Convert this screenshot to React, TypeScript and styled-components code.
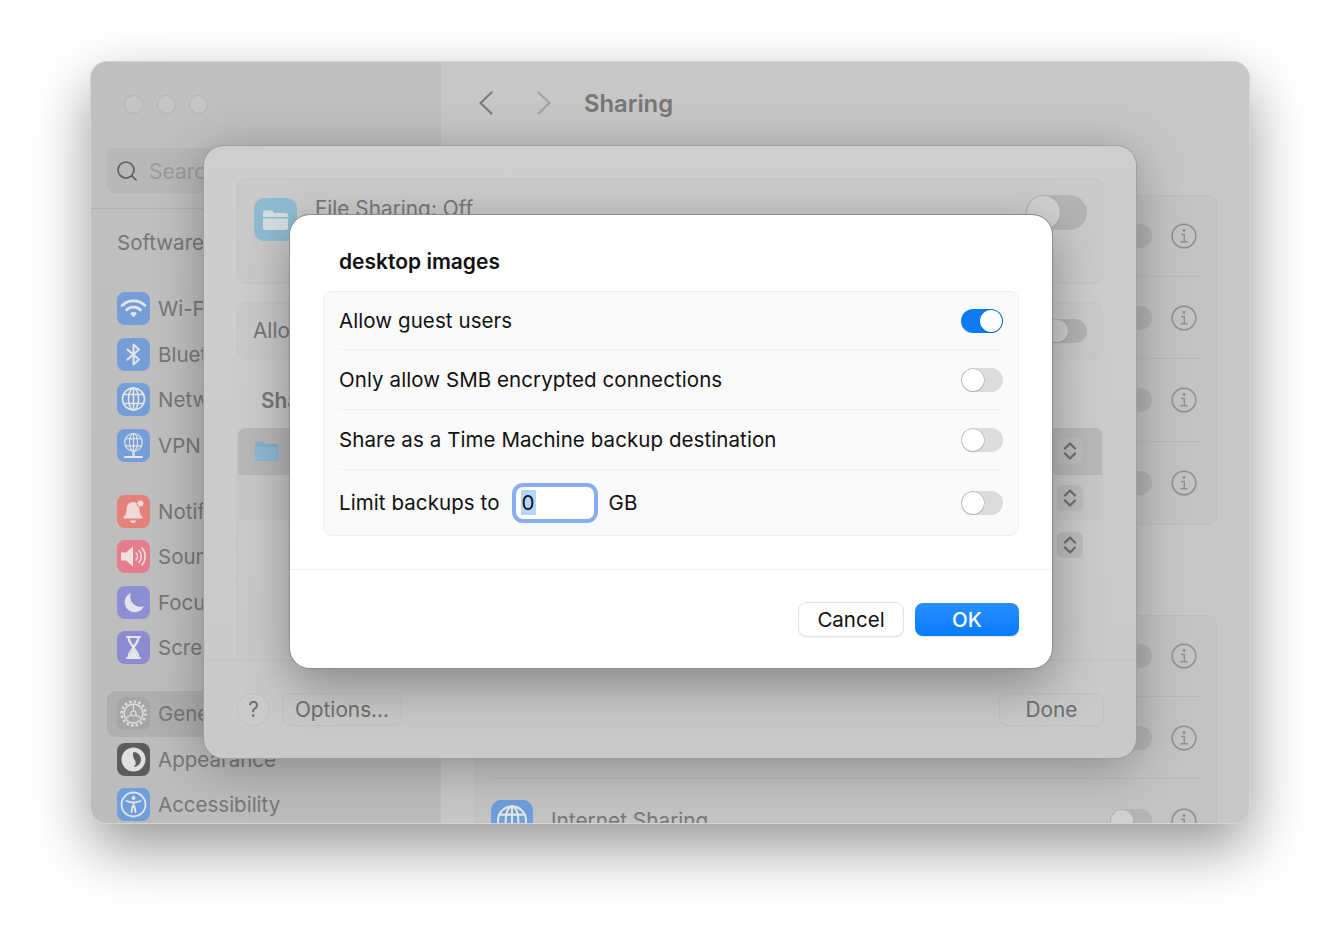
import React from "react";
import styled, { createGlobalStyle } from "styled-components";
import { Search } from "lucide-react";

const Global = createGlobalStyle`
  html, body { margin: 0; padding: 0; background: #fff; }
  body { font-family: Inter, "Noto Sans", "Liberation Sans", sans-serif; -webkit-font-smoothing: antialiased; }
`;

const Page = styled.div`
  width: 1340px;
  height: 943px;
  padding: 62px 91px 120px;
  box-sizing: border-box;
  overflow: hidden;
  background: #fff;
`;

const Win = styled.div`
  position: relative;
  width: 1158px;
  height: 761px;
  border-radius: 16px;
  display: flex;
  background: #c6c7c6;
  box-shadow: 0 0 0 1px #d4d4d4, 0 24px 60px rgba(0, 0, 0, 0.42);
`;

const WinClip = styled.div`
  flex: 1;
  display: flex;
  border-radius: 16px;
  overflow: hidden;
  position: relative;
`;

const Sidebar = styled.aside`
  width: 350px;
  flex: none;
  border-right: 1px solid #bbbcbb;
  box-sizing: border-box;
  background: linear-gradient(#bfc0bf, #bcbcbc);
  display: flex;
  flex-direction: column;
`;

const Lights = styled.div`
  display: flex;
  gap: 13.5px;
  padding: 33px 0 0 33px;
  height: 54px;
  box-sizing: border-box;
  flex: none;
`;

const Light = styled.span`
  width: 19px;
  height: 19px;
  border-radius: 50%;
  background: #c5c5c5;
  border: 1px solid #b3b3b3;
  box-sizing: border-box;
`;

const SearchBox = styled.div`
  margin: 32px 0 0 15px;
  width: 300px;
  height: 45px;
  border-radius: 9px;
  background: #b7b8b7;
  display: flex;
  align-items: center;
  gap: 10px;
  padding-left: 9px;
  box-sizing: border-box;
  color: #5f5f5f;
  font-size: 21px;
  flex: none;
  span { color: #9b9b9b; position: relative; top: 1px; }
`;

const SideRule = styled.div`
  margin-top: 15px;
  height: 1px;
  background: #b0b1b0;
  flex: none;
`;

const SoftwareLabel = styled.div`
  padding: 21px 0 0 26px;
  height: 77px;
  box-sizing: border-box;
  font-size: 20.5px;
  line-height: 26px;
  color: #777;
  flex: none;
`;

const SideGroup = styled.div<{ $top: number }>`
  display: flex;
  flex-direction: column;
  flex: none;
  margin-top: ${(p) => p.$top}px;
`;

const SideItem = styled.div<{ $active?: boolean }>`
  height: 45.5px;
  margin-left: 16px;
  margin-right: 10px;
  padding-left: 10px;
  display: flex;
  align-items: center;
  gap: 8px;
  border-radius: 9px;
  font-size: 20.5px;
  color: #777;
  background: ${(p) => (p.$active ? "#aeafae" : "transparent")};
`;

const AppIcon = styled.span<{ $bg: string; $size?: number; $radius?: number }>`
  width: ${(p) => p.$size ?? 33}px;
  height: ${(p) => p.$size ?? 33}px;
  flex: none;
  border-radius: ${(p) => p.$radius ?? 8}px;
  background: ${(p) => p.$bg};
  display: flex;
  align-items: center;
  justify-content: center;
  svg { display: block; }
`;

const Main = styled.main`
  flex: 1;
  min-width: 0;
  display: flex;
  flex-direction: column;
  background: #c6c7c6;
`;

const Header = styled.header`
  height: 82px;
  flex: none;
  display: flex;
  align-items: center;
  color: #777;
  padding: 0 0 0 30px;
  font-size: 23.8px;
  font-weight: 600;
`;

const NavBtn = styled.span<{ $off?: boolean }>`
  width: 30px;
  height: 36px;
  display: flex;
  align-items: center;
  justify-content: center;
  margin-right: 28px;
  color: ${(p) => (p.$off ? "#a3a4a3" : "#7c7c7c")};
`;

const Title = styled.h1`
  margin: 0 0 0 -3px;
  font: inherit;
`;

const Card = styled.section<{ $top: number }>`
  margin: ${(p) => p.$top}px 32px 0 34px;
  border: 1px solid #bdbebd;
  border-radius: 9px;
  background: #c2c3c2;
  padding: 0 16px 0 15px;
  flex: none;
`;

const ListRow = styled.div`
  height: 82px;
  box-sizing: border-box;
  display: flex;
  align-items: center;
  gap: 18px;
  border-bottom: 1px solid #b9bab9;
  font-size: 20.8px;
  color: #777;
  &:first-child { height: 81px; }
  &:nth-child(3) { height: 83px; }
  &:last-child { border-bottom: 0; }
`;

const RowLabel = styled.span`
  flex: 1;
`;

const Track = styled.span<{ $on?: boolean; $dim?: boolean; $big?: boolean }>`
  position: relative;
  flex: none;
  display: block;
  width: ${(p) => (p.$big ? 61 : 42)}px;
  height: ${(p) => (p.$big ? 35 : 24)}px;
  border-radius: 18px;
  background: ${(p) => (p.$on ? "#0f7bf2" : p.$dim ? "#b3b4b3" : "#dcdcdc")};
`;

const Knob = styled.span<{ $on?: boolean; $dim?: boolean; $big?: boolean }>`
  position: absolute;
  top: 1px;
  ${(p) => (p.$on ? "right: 1px;" : "left: 1px;")}
  width: ${(p) => (p.$big ? 33 : 22)}px;
  height: ${(p) => (p.$big ? 33 : 22)}px;
  border-radius: 50%;
  background: ${(p) => (p.$dim ? "#cfd0cf" : "#fff")};
  box-shadow: 0 0 0 0.5px ${(p) => (p.$dim ? "#aeaeae" : p.$on ? "#0f66d8" : "#aaa")}, 0 1px 1px rgba(0, 0, 0, 0.18);
`;

const BigToggleSlot = styled.div`
  padding-top: 16px;
  flex: none;
`;

const Sheet = styled.div`
  position: absolute;
  left: 113px;
  top: 84px;
  width: 932px;
  height: 612px;
  border-radius: 20px;
  background: linear-gradient(#cdcecd, #c8c9c8);
  box-shadow: 0 0 0 1px #9f9f9f, 0 8px 50px rgba(0, 0, 0, 0.3);
  padding: 32px 33px 0;
  box-sizing: border-box;
  display: flex;
  flex-direction: column;
`;

const SheetCard = styled.div<{ $h: number; $mt?: number }>`
  height: ${(p) => p.$h}px;
  margin-top: ${(p) => p.$mt ?? 0}px;
  flex: none;
  border: 1px solid #c3c4c3;
  border-radius: 9px;
  background: #c9cac9;
  box-sizing: border-box;
  display: flex;
  padding: 0 15px;
  font-size: 20.8px;
  color: #777;
`;

const FileTop = styled.div`
  flex: 1;
  display: flex;
  align-items: flex-start;
  gap: 18px;
  padding: 19px 0 0 1px;
  line-height: 22px;
`;

const AllowRow = styled.div`
  flex: 1;
  display: flex;
  justify-content: space-between;
  align-items: center;
`;

const SharedHead = styled.div`
  height: 69px;
  flex: none;
  box-sizing: border-box;
  padding: 29px 0 0 24px;
  font-size: 20.8px;
  font-weight: 600;
  line-height: 26px;
  color: #777;
`;

const Table = styled.div`
  height: 232px;
  flex: none;
  border-left: 1px solid #c3c4c3;
  border-right: 1px solid #c3c4c3;
  border-top-left-radius: 8px;
  border-top-right-radius: 8px;
  overflow: hidden;
`;

const TRow = styled.div<{ $sel?: boolean; $alt?: boolean }>`
  height: 46.7px;
  box-sizing: border-box;
  display: flex;
  align-items: center;
  padding: 0 19px 0 16px;
  background: ${(p) => (p.$sel ? "#b7b8b7" : p.$alt ? "#c6c7c6" : "transparent")};
`;

const Stepper = styled.span`
  width: 26px;
  height: 26px;
  border-radius: 6px;
  background: #bcbdbc;
  display: flex;
  margin-left: auto;
`;

const SheetFooter = styled.div`
  margin: 0 -33px;
  padding: 32px 32px 0 33px;
  border-top: 1px solid #c2c3c2;
  display: flex;
  align-items: center;
  gap: 12px;
  flex: none;
`;

const HelpBtn = styled.span`
  width: 33px;
  height: 33px;
  border-radius: 50%;
  border: 1px solid #c0c1c0;
  background: #cacbca;
  box-sizing: border-box;
  display: flex;
  align-items: center;
  justify-content: center;
  font-size: 21px;
  color: #6f6f6f;
`;

const GhostBtn = styled.span<{ $w: number; $push?: boolean }>`
  width: ${(p) => p.$w}px;
  height: 33px;
  border-radius: 8px;
  border: 1px solid #bfc0bf;
  background: #c8c9c8;
  box-sizing: border-box;
  display: flex;
  align-items: center;
  justify-content: center;
  font-size: 20.8px;
  color: #6f6f6f;
  margin-left: ${(p) => (p.$push ? "auto" : "0")};
`;

const Dialog = styled.div`
  position: absolute;
  left: 86px;
  top: 69px;
  width: 762px;
  height: 453px;
  border-radius: 20px;
  background: #fff;
  box-shadow: 0 0 0 1px #8e8e8e, 0 16px 50px rgba(0, 0, 0, 0.34);
  display: flex;
  flex-direction: column;
  color: #111;
`;

const DialogTitle = styled.h2`
  margin: 33px 0 0;
  padding-left: 49px;
  font-size: 21px;
  line-height: 28px;
  font-weight: 600;
  color: #111;
`;

const Group = styled.div`
  margin: 15px 33px 0;
  height: 245px;
  flex: none;
  box-sizing: border-box;
  background: #fafafa;
  border: 1px solid #efefef;
  border-radius: 9px;
  padding: 0 15px;
  display: flex;
  flex-direction: column;
  letter-spacing: 0.08px;
`;

const GRow = styled.div<{ $last?: boolean }>`
  flex: ${(p) => (p.$last ? "1" : "none")};
  height: ${(p) => (p.$last ? "auto" : "60px")};
  box-sizing: border-box;
  display: flex;
  align-items: center;
  border-bottom: ${(p) => (p.$last ? "0" : "1px solid #efefef")};
  font-size: 20.5px;
  color: #111;
  &:first-child { height: 58px; }
`;

const GLabel = styled.span`
  flex: 1;
  display: flex;
  align-items: center;
`;

const NumberField = styled.span`
  width: 86px;
  height: 40px;
  margin: 0 11px 0 12px;
  box-sizing: border-box;
  border: 4px solid #86aef0;
  border-radius: 11px;
  background: #fff;
  display: flex;
  align-items: center;
  padding-left: 5px;
`;

const Selected = styled.span`
  background: #b4d5fe;
  padding: 0 1px;
  line-height: 25px;
`;

const DialogFooter = styled.div`
  margin-top: 33px;
  border-top: 1px solid #efefef;
  padding: 32.5px 33px 0;
  display: flex;
  justify-content: flex-end;
  gap: 12px;
`;

const Btn = styled.span<{ $primary?: boolean }>`
  width: 104px;
  height: 33px;
  border-radius: 8px;
  display: flex;
  align-items: center;
  justify-content: center;
  font-size: 20.5px;
  background: ${(p) => (p.$primary ? "linear-gradient(#2b8ffd, #067bff)" : "#fff")};
  color: ${(p) => (p.$primary ? "#fff" : "#111")};
  font-weight: ${(p) => (p.$primary ? 500 : 400)};
  box-shadow: ${(p) =>
    p.$primary ? "0 1px 1px rgba(0,0,0,.1)" : "0 0 0 1px #e3e3e3, 0 1px 2px rgba(0,0,0,.18)"};
`;

const InfoSlot = styled.span`
  display: flex;
  flex: none;
  margin: 0 3px 0 1px;
`;

const s = { fill: "none", stroke: "#e6e6e6", strokeWidth: 2, strokeLinecap: "round" as const, strokeLinejoin: "round" as const };
const Svg = ({ children, size = 33 }: { children: React.ReactNode; size?: number }) => (
  <svg width={size} height={size} viewBox="0 0 33 33">{children}</svg>
);

const Wifi = () => (
  <Svg>
    <g {...s} strokeWidth={2.6}>
      <path d="M5 13.5a16.500 16.500 0 0 1 23 0" />
      <path d="M9.500 18a10 10 0 0 1 14 0" />
    </g>
    <path d="M13 21.500a5 5 0 0 1 7 0l-3.500 3.800z" fill="#e6e6e6" />
  </Svg>
);
const Bluetooth = () => (
  <Svg><path {...s} d="M10.500 11.500l11.500 10-5.500 5V6.500l5.500 5-11.500 10" /></Svg>
);
const GlobeLines = () => (
  <>
    <circle cx="16.500" cy="16" r="11" />
    <ellipse cx="16.500" cy="16" rx="5" ry="11" />
    <path d="M6.500 11.500h20M6.500 20.500h20M16.500 5v22" />
  </>
);
const Globe = ({ size }: { size?: number }) => (
  <Svg size={size}><g {...s} strokeWidth={1.6}><GlobeLines /></g></Svg>
);
const Vpn = () => (
  <Svg>
    <g {...s} strokeWidth={1.4}>
      <g transform="translate(3.300 0.500) scale(.8)"><GlobeLines /></g>
      <path d="M16.500 23v4M8 28h17" strokeWidth={2} />
    </g>
  </Svg>
);
const Bell = () => (
  <Svg>
    <path d="M16 7c-5 0-6.500 4-6.500 8 0 3-1 5-3 7v1.500h19V22c-2-2-3-4-3-7 0-4-1.500-8-6.500-8z" fill="#efdad8" />
    <path d="M13 25.500h6c0 1.500-1.300 2.500-3 2.500s-3-1-3-2.500z" fill="#efdad8" />
    <circle cx="23.500" cy="8.500" r="3.500" fill="#efdad8" stroke="#e5817a" />
  </Svg>
);
const Speaker = () => (
  <Svg>
    <path d="M4 12.500h5l7-6v20l-7-6H4z" fill="#f2dfe2" />
    <g {...s} stroke="#f2dfe2" strokeWidth={1.5}>
      <path d="M19 13a5 5 0 0 1 0 7M22 10.500a9 9 0 0 1 0 12M25 8a13 13 0 0 1 0 17" />
    </g>
  </Svg>
);
const Moon = () => (
  <Svg><path d="M14 7a10 10 0 1 0 13 13 10 10 0 0 1-13-13z" fill="#e4e4ee" /></Svg>
);
const Hourglass = () => (
  <Svg>
    <g {...s} strokeWidth={2.2}>
      <path d="M10 6h13M10 27h13" />
      <path d="M11.500 6c0 6 3.500 7 5 10.500C18 13 21.500 12 21.500 6M11.500 27c0-6 3.500-7 5-10.500C18 20 21.500 21 21.500 27" />
    </g>
    <path d="M12.500 26c1-3.500 2.500-5 4-7.500 1.500 2.500 3 4 4 7.500z" fill="#e6e6e6" />
  </Svg>
);
const Gear = () => (
  <Svg>
    <g {...s} strokeWidth={1.5} stroke="#dedede">
      <circle cx="16.500" cy="16.500" r="9.500" />
      <circle cx="16.500" cy="16.500" r="12" strokeDasharray="2.400 2.300" strokeLinecap="butt" strokeWidth={2.600} />
      <path d="M16.500 16.500V7M16.500 16.500l-8 4.700M16.500 16.500l8 4.700" strokeWidth={1.200} />
    </g>
    <circle cx="16.500" cy="16.500" r="2.500" fill="#a5a5a5" stroke="#dedede" strokeWidth={1.200} />
  </Svg>
);
const Appearance = () => (
  <Svg>
    <circle cx="16.500" cy="16.500" r="12" fill="#dfdfdf" />
    <path d="M16.500 9a7.500 7.500 0 0 1 0 15c2.500-2 3-4.500 1-7.500-1.500-2.500-2-5.500-1-7.500z" fill="#5c5c5c" />
  </Svg>
);
const Access = () => (
  <Svg>
    <circle cx="16.500" cy="16.500" r="12" {...s} strokeWidth={1.800} />
    <circle cx="16.500" cy="10" r="2" fill="#e6e6e6" />
    <path {...s} strokeWidth={1.800} d="M9.500 13l5 1.300h4l5-1.300M16.500 14.500v4M14.500 24l1-5.500h2l1 5.500" />
  </Svg>
);
const Folder = ({ size }: { size: number }) => (
  <svg width={size} height={size} viewBox="0 0 24 24">
    <path d="M1 5.500a2 2 0 0 1 2-2h5.500l2 2H21a2 2 0 0 1 2 2V19a2 2 0 0 1-2 2H3a2 2 0 0 1-2-2z" fill="#82b0cc" />
    <path d="M1 8h22v11a2 2 0 0 1-2 2H3a2 2 0 0 1-2-2z" fill="#8fbad3" />
  </svg>
);
const FileIcon = () => (
  <svg width="43" height="43" viewBox="0 0 43 43">
    <path d="M9 14.500a2 2 0 0 1 2-2h7l2.500 2.500H32a2 2 0 0 1 2 2v2H9z" fill="#d8dfe2" />
    <path d="M9 20.500h25V30a2 2 0 0 1-2 2H11a2 2 0 0 1-2-2z" fill="#d8dfe2" />
  </svg>
);
const Chevrons = () => (
  <svg width="26" height="26" viewBox="0 0 26 26">
    <path d="M8 10.500l5-5 5 5M8 15.500l5 5 5-5" fill="none" stroke="#6d6e6d" strokeWidth="2.200" strokeLinecap="round" strokeLinejoin="round" />
  </svg>
);
const NavChevron = ({ right }: { right?: boolean }) => (
  <svg width="16" height="24" viewBox="0 0 16 24">
    <path d={right ? "M2.500 1.500L13.500 12 2.500 22.500" : "M13.500 1.500L2.500 12l11 10.500"} fill="none" stroke="currentColor" strokeWidth="2.300" strokeLinecap="round" strokeLinejoin="round" />
  </svg>
);
const Info = () => (
  <svg width="26" height="26" viewBox="0 0 27 27">
    <circle cx="13.500" cy="13.500" r="12.300" fill="none" stroke="#8e8f8e" strokeWidth="1.600" />
    <circle cx="13.500" cy="7.800" r="1.500" fill="#8e8f8e" />
    <path d="M10.500 12h3.300v7.500M9.800 19.500h7.500" fill="none" stroke="#8e8f8e" strokeWidth="1.500" />
  </svg>
);

const Toggle = ({ on, dim, big }: { on?: boolean; dim?: boolean; big?: boolean }) => (
  <Track $on={on} $dim={dim} $big={big}><Knob $on={on} $dim={dim} $big={big} /></Track>
);

const groups = [
  { top: 0, items: [["Wi-Fi", "#759ed8", <Wifi />], ["Bluetooth", "#759ed8", <Bluetooth />], ["Network", "#759ed8", <Globe />], ["VPN", "#759ed8", <Vpn />]] },
  { top: 20.5, items: [["Notifications", "#e5817a", <Bell />], ["Sound", "#e57d8e", <Speaker />], ["Focus", "#8c8ed3", <Moon />], ["Screen Time", "#8c8ad0", <Hourglass />]] },
  { top: 20.5, items: [["General", "#a5a5a5", <Gear />], ["Appearance", "#5c5c5c", <Appearance />], ["Accessibility", "#6e9edb", <Access />]] },
] as const;

const ServiceRow = ({ label, icon }: { label?: string; icon?: boolean }) => (
  <ListRow>
    {icon && <AppIcon $bg="#6e9edb" $size={42} $radius={10}><Globe size={42} /></AppIcon>}
    <RowLabel>{label}</RowLabel>
    <Toggle dim />
    <InfoSlot><Info /></InfoSlot>
  </ListRow>
);

export default function App() {
  return (
    <Page>
      <Global />
      <Win>
        <WinClip>
          <Sidebar>
            <Lights><Light /><Light /><Light /></Lights>
            <SearchBox><Search size={24} strokeWidth={1.7} /><span>Search</span></SearchBox>
            <SideRule />
            <SoftwareLabel>Software Update</SoftwareLabel>
            {groups.map((g, i) => (
              <SideGroup key={i} $top={g.top}>
                {g.items.map(([label, color, icon]) => (
                  <SideItem key={label} $active={label === "General"}>
                    <AppIcon $bg={color}>{icon}</AppIcon>
                    <span>{label}</span>
                  </SideItem>
                ))}
              </SideGroup>
            ))}
          </Sidebar>
          <Main>
            <Header>
              <NavBtn><NavChevron /></NavBtn>
              <NavBtn $off><NavChevron right /></NavBtn>
              <Title>Sharing</Title>
            </Header>
            <Card $top={51}>
              <ServiceRow /><ServiceRow /><ServiceRow /><ServiceRow />
            </Card>
            <Card $top={90}>
              <ServiceRow /><ServiceRow /><ServiceRow label="Internet Sharing" icon />
            </Card>
          </Main>
          <Sheet>
            <SheetCard $h={106}>
              <FileTop>
                <AppIcon $bg="#8fbcd3" $size={43} $radius={10}><FileIcon /></AppIcon>
                <span>File Sharing: Off</span>
              </FileTop>
              <BigToggleSlot><Toggle dim big /></BigToggleSlot>
            </SheetCard>
            <SheetCard $h={57} $mt={18}>
              <AllowRow><span>Allow</span><Toggle dim /></AllowRow>
            </SheetCard>
            <SharedHead>Sha</SharedHead>
            <Table>
              <TRow $sel><Folder size={26} /><Stepper><Chevrons /></Stepper></TRow>
              <TRow $alt><Stepper><Chevrons /></Stepper></TRow>
              <TRow><Stepper><Chevrons /></Stepper></TRow>
            </Table>
            <SheetFooter>
              <HelpBtn>?</HelpBtn>
              <GhostBtn $w={120}>Options...</GhostBtn>
              <GhostBtn $w={105} $push>Done</GhostBtn>
            </SheetFooter>
            <Dialog>
              <DialogTitle>desktop images</DialogTitle>
              <Group>
                <GRow><GLabel>Allow guest users</GLabel><Toggle on /></GRow>
                <GRow><GLabel>Only allow SMB encrypted connections</GLabel><Toggle /></GRow>
                <GRow><GLabel>Share as a Time Machine backup destination</GLabel><Toggle /></GRow>
                <GRow $last>
                  <GLabel>Limit backups to<NumberField><Selected>0</Selected></NumberField>GB</GLabel>
                  <Toggle />
                </GRow>
              </Group>
              <DialogFooter>
                <Btn>Cancel</Btn>
                <Btn $primary>OK</Btn>
              </DialogFooter>
            </Dialog>
          </Sheet>
        </WinClip>
      </Win>
    </Page>
  );
}
